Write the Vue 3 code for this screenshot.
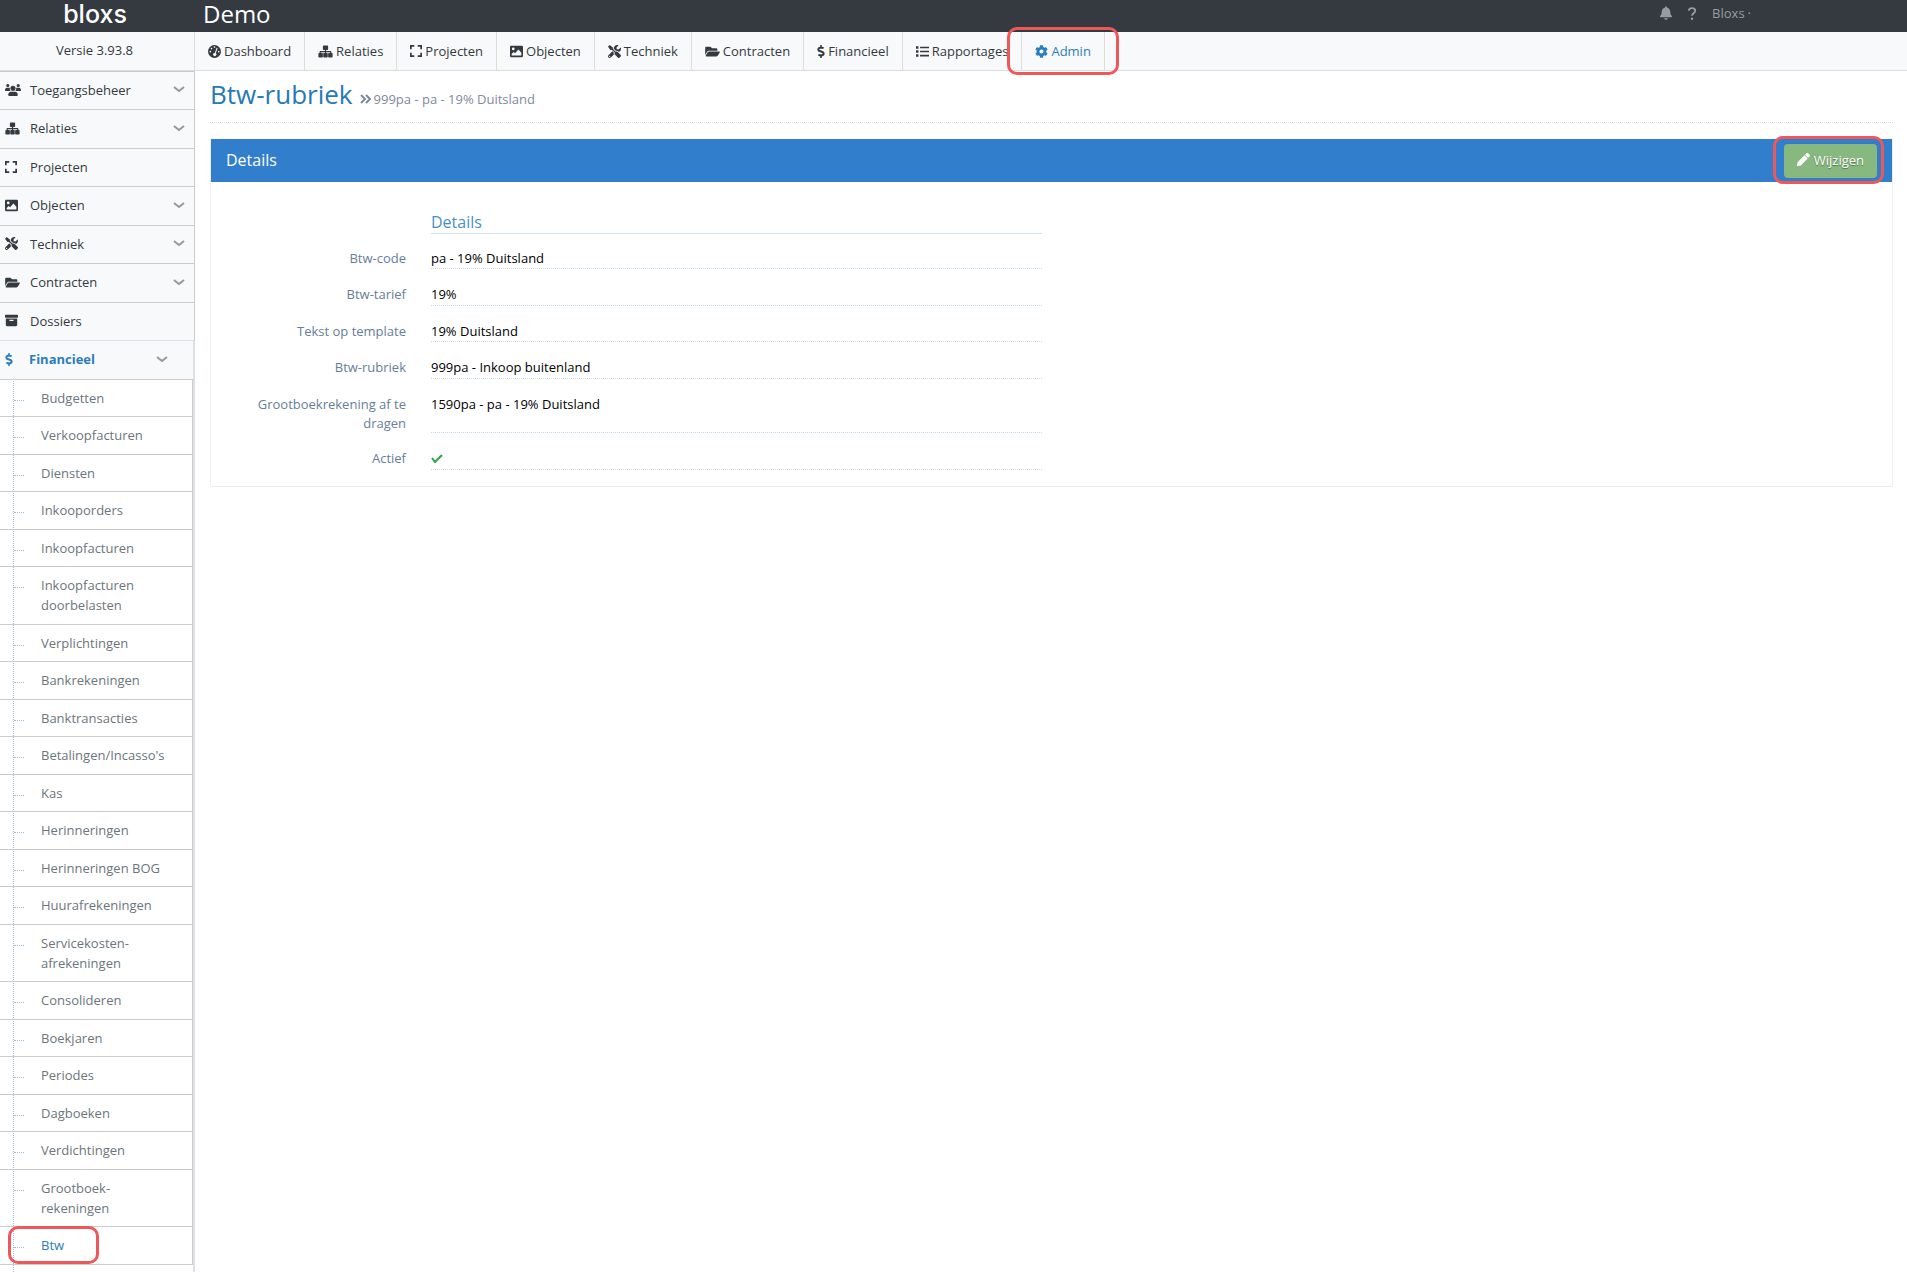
<script setup>
import { ref } from 'vue'

// path: filled shape, line: stroked shape
const icons = {
  gauge: { box: '0 0 16 16', path: 'M8 0a8 8 0 1 0 0 16A8 8 0 0 0 8 0zM8 1.6a1 1 0 1 1 0 2 1 1 0 0 1 0-2zM4.3 3.4a1 1 0 1 1 0 2 1 1 0 0 1 0-2zM2.8 7.2a1 1 0 1 1 0 2 1 1 0 0 1 0-2zM13.2 7.2a1 1 0 1 1 0 2 1 1 0 0 1 0-2zM10.6 3.4l1.2.5-2.2 6.2a2 2 0 1 1-1.2-.4z' },
  sitemap: { box: '0 0 20 16', path: 'M7.5 0h5c.6 0 1 .4 1 1v4c0 .6-.4 1-1 1h-1.7v1.3h5.7c.8 0 1.4.6 1.4 1.4V10h.6c.6 0 1 .4 1 1v4c0 .6-.4 1-1 1h-4c-.6 0-1-.4-1-1v-4c0-.6.4-1 1-1h1.8V8.9h-5.5V10H12c.6 0 1 .4 1 1v4c0 .6-.4 1-1 1H8c-.6 0-1-.4-1-1v-4c0-.6.4-1 1-1h1.2V8.9H3.7V10h1.8c.6 0 1 .4 1 1v4c0 .6-.4 1-1 1h-4c-.6 0-1-.4-1-1v-4c0-.6.4-1 1-1h.6V8.7c0-.8.6-1.4 1.4-1.4h5.7V6H7.5c-.6 0-1-.4-1-1V1c0-.6.4-1 1-1z' },
  expand: { box: '1 1 14 14', line: 'M2 6V2h4M10 2h4v4M14 10v4h-4M6 14H2v-4' },
  image: { box: '0 0 16 16', path: 'M1.5 1h13c.8 0 1.5.7 1.5 1.5v11c0 .8-.7 1.5-1.5 1.5h-13C.7 15 0 14.3 0 13.5v-11C0 1.7.7 1 1.5 1zM4 3.2a1.7 1.7 0 1 0 0 3.4 1.7 1.7 0 0 0 0-3.4zM2 13h12V9.5L10.3 5.5 6.3 10 4.5 8.5 2 11z' },
  tools: { box: '0 0 512 512', path: 'M501.1 395.7L384 278.6c-23.1-23.1-57.6-27.6-85.4-13.9L192 158.1V96L64 0 0 64l96 128h62.1l106.6 106.6c-13.6 27.8-9.2 62.3 13.9 85.4l117.1 117.1c14.6 14.6 38.2 14.6 52.7 0l52.7-52.7c14.5-14.6 14.5-38.2 0-52.7zM331.7 225c28.3 0 54.9 11 74.9 31l19.4 19.4c15.8-6.9 30.8-16.5 43.8-29.5 37.1-37.1 49.7-89.3 37.9-136.7-2.2-9-13.5-12.1-20.1-5.5l-74.4 74.4-67.9-11.3L334 98.9l74.4-74.4c6.6-6.6 3.4-17.9-5.7-20.2-47.4-11.7-99.6.9-136.6 37.9-28.5 28.5-41.9 66.1-41.2 103.6l82.1 82.1c8.1-1.9 16.5-2.9 24.7-2.9zm-103.9 82l-56.7-56.7L18.7 402.8c-25 25-25 65.5 0 90.5s65.5 25 90.5 0l123.6-123.6c-7.6-19.9-9.9-41.6-5-62.7zM64 472c-13.2 0-24-10.8-24-24 0-13.3 10.7-24 24-24s24 10.7 24 24c0 13.2-10.7 24-24 24z' },
  folder: { box: '0 0 576 512', path: 'M572.694 292.093L500.27 416.248A63.997 63.997 0 0 1 444.989 448H45.025c-18.523 0-30.064-20.093-20.731-36.093l72.424-124.155A64 64 0 0 1 152 256h399.964c18.523 0 30.064 20.093 20.73 36.093zM152 224h328v-48c0-26.51-21.49-48-48-48H272l-64-64H48C21.49 64 0 85.49 0 112v278.046l69.077-118.418C86.214 242.25 117.989 224 152 224z' },
  dollar: { box: '0 0 288 512', path: 'M209.2 233.4l-108-31.6C88.7 198.2 80 186.5 80 173.5c0-16.3 13.2-29.5 29.5-29.5h66.3c12.2 0 24.2 3.7 34.2 10.5 6.1 4.1 14.3 3.1 19.5-2l34.8-34c7.1-6.9 6.1-18.4-1.8-24.5C238 74.8 207.4 64.1 176 64V16c0-8.8-7.2-16-16-16h-32c-8.8 0-16 7.2-16 16v48h-2.5C45.8 64-5.4 118.7.5 183.6c4.2 46.1 39.4 83.6 83.8 96.6l102.5 30c12.5 3.7 21.2 15.3 21.2 28.3 0 16.3-13.2 29.5-29.5 29.5h-66.3C100 368 88 364.3 78 357.5c-6.1-4.1-14.3-3.1-19.5 2l-34.8 34c-7.1 6.9-6.1 18.4 1.8 24.5 24.5 19.2 55.1 29.9 86.5 30v48c0 8.8 7.2 16 16 16h32c8.8 0 16-7.2 16-16v-48.2c46.6-.9 90.3-28.6 105.7-72.7 21.5-61.6-14.6-124.8-72.5-141.7z' },
  list: { box: '0 0 16 16', path: 'M0 1.5h3v3H0zM5 2h11v2H5zM0 6.5h3v3H0zM5 7h11v2H5zM0 11.5h3v3H0zM5 12h11v2H5z' },
  cog: { box: '0 0 512 512', path: 'M487.4 315.7l-42.6-24.6c4.3-23.2 4.3-47 0-70.2l42.6-24.6c4.9-2.8 7.1-8.6 5.5-14-11.1-35.6-30-67.8-54.7-94.6-3.8-4.1-10-5.1-14.8-2.3L380.8 110c-17.9-15.4-38.5-27.3-60.8-35.1V25.8c0-5.6-3.9-10.5-9.4-11.7-36.7-8.2-74.3-7.8-109.2 0-5.5 1.2-9.4 6.1-9.4 11.7V75c-22.2 7.9-42.8 19.8-60.8 35.1L88.7 85.5c-4.9-2.8-11-1.9-14.8 2.3-24.7 26.7-43.6 58.9-54.7 94.6-1.7 5.4.6 11.2 5.5 14L67.3 221c-4.3 23.2-4.3 47 0 70.2l-42.6 24.6c-4.9 2.8-7.1 8.6-5.5 14 11.1 35.6 30 67.8 54.7 94.6 3.8 4.1 10 5.1 14.8 2.3l42.6-24.6c17.9 15.4 38.5 27.3 60.8 35.1v49.2c0 5.6 3.9 10.5 9.4 11.7 36.7 8.2 74.3 7.8 109.2 0 5.5-1.2 9.4-6.1 9.4-11.7v-49.2c22.2-7.9 42.8-19.8 60.8-35.1l42.6 24.6c4.9 2.8 11 1.9 14.8-2.3 24.7-26.7 43.6-58.9 54.7-94.6 1.5-5.5-.7-11.3-5.6-14.1zM256 336c-44.1 0-80-35.9-80-80s35.9-80 80-80 80 35.9 80 80-35.9 80-80 80z' },
  users: { box: '0 0 20 16', path: 'M3.5 1a2 2 0 1 1 0 4 2 2 0 0 1 0-4zM16.5 1a2 2 0 1 1 0 4 2 2 0 0 1 0-4zM10 3.2a3.2 3.2 0 1 1 0 6.4 3.2 3.2 0 0 1 0-6.4zM2.3 5.8h2.9c.3 0 .6.1.9.2-.3 1.5.1 2.9 1 4H.6c-.4 0-.6-.3-.6-.7C0 7.4 1 5.8 2.3 5.8zM14.8 5.8h2.9c1.3 0 2.3 1.6 2.3 3.5 0 .4-.2.7-.6.7h-6.5c.9-1.1 1.3-2.5 1-4 .3-.1.6-.2.9-.2zM7.3 10.8h5.4c2 0 3.3 1.7 3.3 4.2 0 .6-.4 1-.9 1H4.9c-.5 0-.9-.4-.9-1 0-2.5 1.3-4.2 3.3-4.2z' },
  archive: { box: '0 0 16 16', path: 'M.8 1h14.4c.5 0 .8.3.8.8v1.9c0 .5-.3.8-.8.8H.8c-.5 0-.8-.3-.8-.8V1.8C0 1.3.3 1 .8 1zM1 5.5h14v8c0 .8-.7 1.5-1.5 1.5h-11C1.7 15 1 14.3 1 13.5zM5.5 7.2v1.3h5V7.2z' },
  bell: { box: '0 0 448 512', path: 'M224 512c35.32 0 63.97-28.65 63.97-64H160.03c0 35.35 28.65 64 63.97 64zm215.39-149.71c-19.32-20.76-55.47-51.99-55.47-154.29 0-77.7-54.48-139.9-127.94-155.16V32c0-17.67-14.32-32-31.98-32s-31.98 14.33-31.98 32v20.84C118.56 68.1 64.08 130.3 64.08 208c0 102.3-36.15 133.53-55.47 154.29-6 6.45-8.66 14.16-8.61 21.71.11 16.4 12.98 32 32.1 32h383.8c19.12 0 32-15.6 32.1-32 .05-7.55-2.61-15.27-8.61-21.71z' },
  pencil: { box: '0 0 512 512', path: 'M497.9 142.1l-46.1 46.1c-4.7 4.7-12.3 4.7-17 0l-111-111c-4.7-4.7-4.7-12.3 0-17l46.1-46.1c18.7-18.7 49.1-18.7 67.9 0l60.1 60.1c18.8 18.7 18.8 49.1 0 67.9zM284.2 99.8L21.6 362.4.4 483.9c-2.9 16.4 11.4 30.6 27.8 27.8l121.5-21.3 262.6-262.6c4.7-4.7 4.7-12.3 0-17l-111-111c-4.8-4.7-12.4-4.7-17.1 0z' },
}

const topMenu = [
  { label: 'Dashboard', icon: 'gauge' },
  { label: 'Relaties', icon: 'sitemap' },
  { label: 'Projecten', icon: 'expand' },
  { label: 'Objecten', icon: 'image' },
  { label: 'Techniek', icon: 'tools' },
  { label: 'Contracten', icon: 'folder' },
  { label: 'Financieel', icon: 'dollar' },
  { label: 'Rapportages', icon: 'list' },
  { label: 'Admin', icon: 'cog', active: true },
]

const sideMenu = [
  { label: 'Toegangsbeheer', icon: 'users', more: true },
  { label: 'Relaties', icon: 'sitemap', more: true },
  { label: 'Projecten', icon: 'expand' },
  { label: 'Objecten', icon: 'image', more: true },
  { label: 'Techniek', icon: 'tools', more: true },
  { label: 'Contracten', icon: 'folder', more: true },
  { label: 'Dossiers', icon: 'archive' },
  { label: 'Financieel', icon: 'dollar', more: true, open: true },
]

const subMenu = [
  'Budgetten',
  'Verkoopfacturen',
  'Diensten',
  'Inkooporders',
  'Inkoopfacturen',
  'Inkoopfacturen doorbelasten',
  'Verplichtingen',
  'Bankrekeningen',
  'Banktransacties',
  "Betalingen/Incasso's",
  'Kas',
  'Herinneringen',
  'Herinneringen BOG',
  'Huurafrekeningen',
  'Servicekosten-afrekeningen',
  'Consolideren',
  'Boekjaren',
  'Periodes',
  'Dagboeken',
  'Verdichtingen',
  'Grootboek-rekeningen',
  'Btw',
]

const current = ref('Btw')

const details = [
  { label: 'Btw-code', value: 'pa - 19% Duitsland' },
  { label: 'Btw-tarief', value: '19%' },
  { label: 'Tekst op template', value: '19% Duitsland' },
  { label: 'Btw-rubriek', value: '999pa - Inkoop buitenland' },
  { label: 'Grootboekrekening af te dragen', value: '1590pa - pa - 19% Duitsland' },
  { label: 'Actief', checked: true },
]
</script>

<template>
  <div class="page">
    <header class="topbar">
      <a class="logo" href="#">bloxs</a>
      <span class="tenant">Demo</span>
      <div class="user">
        <svg class="bell" :viewBox="icons.bell.box"><path :d="icons.bell.path" /></svg>
        <svg class="help" viewBox="0 0 10 14">
          <path d="M1.5 4C1.7 2.2 3 1.2 5 1.2c2.1 0 3.5 1.1 3.5 2.9 0 2.5-3.5 2.6-3.5 5.2" />
          <circle cx="5" cy="12.6" r="1.3" />
        </svg>
        <span>Bloxs</span>
        <span class="dot">·</span>
      </div>
    </header>

    <div class="menubar">
      <div class="version">Versie 3.93.8</div>
      <nav class="menu">
        <a
          v-for="item in topMenu"
          :key="item.label"
          href="#"
          :class="['menu-item', { active: item.active }]"
        >
          <svg :class="['icon', item.icon]" :viewBox="icons[item.icon].box">
            <path v-if="icons[item.icon].path" fill-rule="evenodd" :d="icons[item.icon].path" />
            <path v-else class="line" :d="icons[item.icon].line" />
          </svg>
          {{ item.label }}
        </a>
      </nav>
    </div>

    <div class="body">
      <aside class="sidebar">
        <ul class="side-list">
          <li v-for="item in sideMenu" :key="item.label">
            <a href="#" :class="['side-item', { open: item.open }]">
              <span class="side-icon">
                <svg :class="['icon', item.icon]" :viewBox="icons[item.icon].box">
                  <path v-if="icons[item.icon].path" fill-rule="evenodd" :d="icons[item.icon].path" />
                  <path v-else class="line" :d="icons[item.icon].line" />
                </svg>
              </span>
              <span class="side-label">{{ item.label }}</span>
              <svg v-if="item.more" class="chevron" viewBox="0 0 12 7">
                <path d="M1 1l5 4 5-4" />
              </svg>
            </a>
          </li>
        </ul>
        <ul class="sub-list">
          <li v-for="name in subMenu" :key="name">
            <a
              href="#"
              :class="['sub-item', { current: name === current }]"
              @click.prevent="current = name"
            >{{ name }}</a>
          </li>
        </ul>
      </aside>

      <main class="content">
        <div class="heading">
          <h1>Btw-rubriek</h1>
          <svg class="angles" viewBox="0 0 11 10"><path d="M1 1l4 4-4 4M6 1l4 4-4 4" /></svg>
          <small>999pa - pa - 19% Duitsland</small>
        </div>

        <section class="panel">
          <div class="panel-head">
            <h2>Details</h2>
            <div class="marked">
              <button type="button" class="edit-btn">
                <svg class="icon" :viewBox="icons.pencil.box"><path :d="icons.pencil.path" /></svg>
                Wijzigen
              </button>
            </div>
          </div>
          <div class="panel-body">
            <h3>Details</h3>
            <dl>
              <div v-for="row in details" :key="row.label" class="row">
                <dt>{{ row.label }}</dt>
                <dd>
                  <svg v-if="row.checked" class="check" viewBox="0 0 12 9"><path d="M1 4l3 4 7-7" /></svg>
                  <template v-else>{{ row.value }}</template>
                </dd>
              </div>
            </dl>
          </div>
        </section>
      </main>
    </div>
  </div>
</template>

<style>
body {
  margin: 0;
  background: #fff;
}
</style>

<style scoped>
*,
*::before,
*::after {
  box-sizing: border-box;
}
.page {
  display: flex;
  flex-direction: column;
  min-height: 100vh;
  font-family: 'Open Sans', 'Noto Sans', sans-serif;
  font-size: 13px;
  line-height: 20px;
  color: #343a40;
}
a {
  color: inherit;
  text-decoration: none;
}
ul,
dl,
dd,
h1,
h2,
h3 {
  margin: 0;
  padding: 0;
  list-style: none;
  font-weight: 400;
}
.icon {
  width: 13px;
  height: 13px;
  fill: currentColor;
  flex: none;
}
.icon.expand {
  width: 12px;
  height: 12px;
}
.icon.sitemap,
.icon.folder {
  width: 15px;
}
.icon.users {
  width: 16px;
}
.icon.dollar {
  width: 8px;
}
.line {
  fill: none;
  stroke: currentColor;
  stroke-width: 2;
}

/* top bar */
.topbar {
  display: flex;
  align-items: center;
  height: 32px;
  padding-right: 156px;
  background: #343a40;
  color: #fff;
}
.logo {
  width: 190px;
  padding-bottom: 4px;
  font-family: Inter, sans-serif;
  font-size: 25px;
  font-weight: 500;
  line-height: 28px;
  text-align: center;
}
.tenant {
  padding: 0 0 4px 13px;
  font-size: 24px;
  line-height: 28px;
}
.user {
  display: flex;
  align-items: center;
  margin-left: auto;
  padding-bottom: 6px;
  color: #999c9f;
}
.bell {
  width: 12px;
  height: 14px;
  margin-right: 15px;
  fill: currentColor;
}
.help {
  width: 10px;
  height: 13px;
  margin-right: 15px;
  fill: currentColor;
}
.help path {
  fill: none;
  stroke: currentColor;
  stroke-width: 2;
}
.dot {
  margin-left: 3px;
}

/* menu bar */
.menubar {
  display: flex;
  height: 39px;
  border-bottom: 1px solid #ddd;
  background: #f8f9fb;
}
.version {
  width: 195px;
  padding: 8px 5px 0 0;
  border-right: 1px solid #ddd;
  text-align: center;
}
.menu {
  display: flex;
}
.menu-item {
  position: relative;
  display: flex;
  align-items: center;
  gap: 3px;
  padding: 0 13px;
  border-right: 1px solid #ddd;
}
.menu-item.active {
  color: #2b7dbc;
}

/* red markers around the things to click */
.menu-item.active::after,
.marked::after,
.sub-item.current::after {
  content: '';
  position: absolute;
  z-index: 1;
  border: 3px solid #ee5859;
  border-radius: 10px;
  pointer-events: none;
}
.menu-item.active::after {
  inset: -5px -15px;
}

.body {
  display: flex;
  flex: 1;
}

/* sidebar */
.sidebar {
  display: flex;
  flex-direction: column;
  flex: none;
  width: 195px;
  border-top: 1px solid #ccc;
}
.side-item {
  display: flex;
  align-items: center;
  height: 38px;
  padding: 0 9px 2px 5px;
  border-right: 1px solid #ccc;
  border-bottom: 1px solid #ccc;
  background: #f8f9fb;
}
.side-list li:nth-child(even) .side-item {
  height: 39px;
}
.side-list li:nth-child(7) .side-item {
  border-bottom-color: #dee2e6;
}
.side-icon {
  display: flex;
  width: 25px;
}
.side-label {
  flex: 1;
}
.chevron {
  width: 12px;
  height: 7px;
  fill: none;
  stroke: #999;
  stroke-width: 2;
}
.side-item.open {
  padding-right: 25px;
  border-right: 2px solid #dee2e6;
  color: #2b7dbc;
  font-weight: 700;
}
.side-item.open .side-icon {
  width: 24px;
}
.sub-list {
  position: relative;
  flex: 1;
  border-right: 2px solid #dee2e6;
}
.sub-list::before {
  content: '';
  position: absolute;
  top: 1px;
  bottom: 0;
  left: 13px;
  border-left: 1px dotted #9dbdd6;
}
.sub-item {
  position: relative;
  display: block;
  padding: 8px 24px 8px 41px;
  border-right: 1px solid #ccc;
  border-bottom: 1px solid #ccc;
  color: #6c757d;
}
.sub-list li:nth-child(even) .sub-item {
  padding-bottom: 9px;
}
.sub-item::before {
  content: '';
  position: absolute;
  top: 20px;
  left: 14px;
  width: 10px;
  border-top: 1px dotted #9dbdd6;
}
.sub-item.current {
  color: #2b7dbc;
}
.sub-item.current::after {
  top: -1px;
  bottom: 0;
  left: 8px;
  width: 91px;
}

/* content */
.content {
  flex: 1;
  min-width: 0;
  padding: 0 14px 0 15px;
}
.heading {
  display: flex;
  align-items: baseline;
  height: 52px;
  padding-top: 5px;
  border-bottom: 1px dotted #d8d8d8;
}
.heading h1 {
  color: #2679b5;
  font-size: 26px;
  line-height: 36px;
}
.angles {
  width: 11px;
  height: 10px;
  margin: 0 3px 0 7px;
  fill: none;
  stroke: #8089a0;
  stroke-width: 2;
}
.heading small {
  color: #8089a0;
  font-size: 13px;
}
.panel {
  margin-top: 16px;
  border: 1px solid #eee;
  border-top: 0;
}
.panel-head {
  display: flex;
  align-items: center;
  justify-content: space-between;
  height: 43px;
  padding: 0 15px;
  background: #307ecc;
}
.panel-head h2 {
  padding-bottom: 2px;
  color: #fff;
  font-size: 16px;
  font-weight: 500;
}
.marked {
  position: relative;
}
.marked::after {
  inset: -8px -7px -6px -11px;
}
.edit-btn {
  display: flex;
  align-items: center;
  gap: 4px;
  height: 34px;
  padding: 0 13px 2px;
  border: 0;
  border-radius: 4px;
  background: #87b87f;
  color: #fff;
  font: inherit;
  text-shadow: 0 1px 1px rgba(0, 0, 0, 0.4);
  cursor: pointer;
}
.panel-body {
  width: 50%;
  padding: 29px 10px 16px 20px;
}
.panel-body h3 {
  margin-left: 200px;
  border-bottom: 1px solid #d5e3ef;
  color: #478fca;
  font-size: 16px;
  line-height: 22px;
}
dl {
  display: grid;
  gap: 1px;
  line-height: 19px;
}
.row {
  display: grid;
  grid-template-columns: 175px 1fr;
  column-gap: 25px;
  padding-top: 15px;
}
dt {
  color: #667e99;
  text-align: right;
}
dd {
  border-bottom: 1px dotted #c9dbea;
  color: #000;
}
.row:nth-child(even) dd {
  padding-bottom: 1px;
}
.check {
  width: 12px;
  height: 9px;
  fill: none;
  stroke: #28a745;
  stroke-width: 2;
}
</style>
